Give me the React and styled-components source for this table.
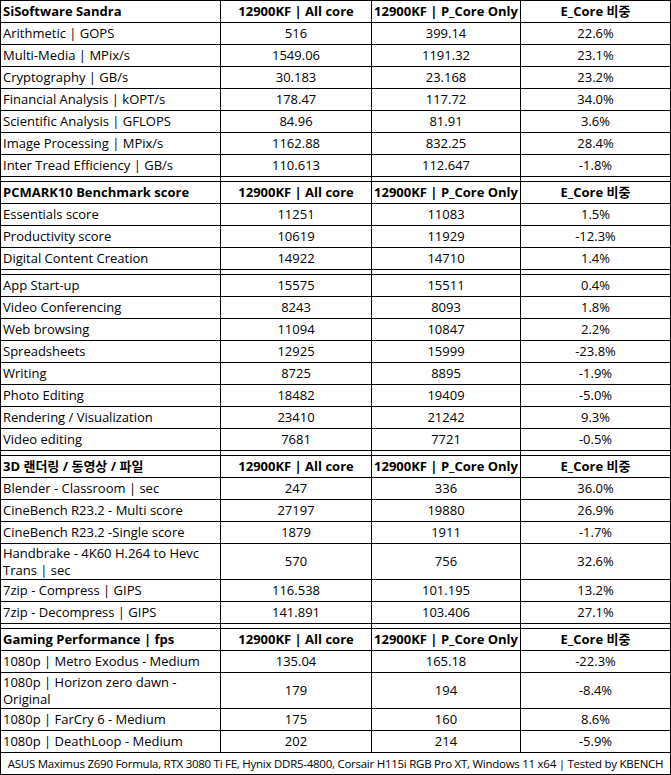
import React from 'react';
import styled, { createGlobalStyle } from 'styled-components';

const Global = createGlobalStyle`
  html, body { margin: 0; padding: 0; background: #fff; }
  body { font-family: "Open Sans", "Noto Sans CJK KR", sans-serif; }
`;

const Table = styled.table`
  border-collapse: separate;
  border-spacing: 0;
  table-layout: fixed;
  width: 671px;
  border-top: 1px solid #000;
  border-left: 1px solid #000;
  font-size: 13px;
  color: #000;
  box-sizing: border-box;
`;

const Col = styled.col`
  width: ${(p) => p.$w}px;
`;

const Cell = styled.td`
  box-sizing: border-box;
  height: ${(p) => (p.$tall ? 36 : 22)}px;
  padding: 0 2px;
  border-right: 1px solid #000;
  border-bottom: 1px solid #000;
  text-align: ${(p) => (p.$left ? 'left' : 'center')};
  font-weight: ${(p) => (p.$bold ? 700 : 400)};
  line-height: 17px;
  white-space: pre-line;
  vertical-align: middle;
  overflow: hidden;
`;

const Spacer = styled.td`
  box-sizing: border-box;
  height: 5px;
  padding: 0;
  font-size: 0;
  line-height: 0;
  border-right: 1px solid #000;
  border-bottom: 1px solid #000;
`;

const Footer = styled.td`
  box-sizing: border-box;
  height: 22px;
  padding: 0;
  border-right: 1px solid #000;
  border-bottom: 1px solid #000;
  text-align: center;
  font-size: 11.5px;
  letter-spacing: -0.26px;
  line-height: 17px;
  white-space: nowrap;
`;

const HEAD = ['12900KF | All core', '12900KF | P_Core Only', 'E_Core 비중'];

const sections = [
  {
    title: 'SiSoftware Sandra',
    rows: [
      ['Arithmetic | GOPS', '516', '399.14', '22.6%'],
      ['Multi-Media | MPix/s', '1549.06', '1191.32', '23.1%'],
      ['Cryptography | GB/s', '30.183', '23.168', '23.2%'],
      ['Financial Analysis | kOPT/s', '178.47', '117.72', '34.0%'],
      ['Scientific Analysis | GFLOPS', '84.96', '81.91', '3.6%'],
      ['Image Processing | MPix/s', '1162.88', '832.25', '28.4%'],
      ['Inter Tread Efficiency | GB/s', '110.613', '112.647', '-1.8%'],
    ],
  },
  {
    title: 'PCMARK10 Benchmark score',
    rows: [
      ['Essentials score', '11251', '11083', '1.5%'],
      ['Productivity score', '10619', '11929', '-12.3%'],
      ['Digital Content Creation', '14922', '14710', '1.4%'],
    ],
  },
  {
    title: null,
    rows: [
      ['App Start-up', '15575', '15511', '0.4%'],
      ['Video Conferencing', '8243', '8093', '1.8%'],
      ['Web browsing', '11094', '10847', '2.2%'],
      ['Spreadsheets', '12925', '15999', '-23.8%'],
      ['Writing', '8725', '8895', '-1.9%'],
      ['Photo Editing', '18482', '19409', '-5.0%'],
      ['Rendering / Visualization', '23410', '21242', '9.3%'],
      ['Video editing', '7681', '7721', '-0.5%'],
    ],
  },
  {
    title: '3D 랜더링 / 동영상 / 파일',
    rows: [
      ['Blender - Classroom | sec', '247', '336', '36.0%'],
      ['CineBench R23.2 - Multi score', '27197', '19880', '26.9%'],
      ['CineBench R23.2 -Single score', '1879', '1911', '-1.7%'],
      ['Handbrake - 4K60 H.264 to Hevc\nTrans | sec', '570', '756', '32.6%', true],
      ['7zip - Compress | GIPS', '116.538', '101.195', '13.2%'],
      ['7zip - Decompress | GIPS', '141.891', '103.406', '27.1%'],
    ],
  },
  {
    title: 'Gaming Performance | fps',
    rows: [
      ['1080p | Metro Exodus - Medium', '135.04', '165.18', '-22.3%'],
      ['1080p | Horizon zero dawn -\nOriginal', '179', '194', '-8.4%', true],
      ['1080p | FarCry 6 - Medium', '175', '160', '8.6%'],
      ['1080p | DeathLoop - Medium', '202', '214', '-5.9%'],
    ],
  },
];

function SpacerRow() {
  return (
    <tr>
      <Spacer />
      <Spacer />
      <Spacer />
      <Spacer />
    </tr>
  );
}

export default function App() {
  return (
    <>
      <Global />
      <Table>
        <colgroup>
          <Col $w={220} />
          <Col $w={151} />
          <Col $w={149} />
          <Col $w={150} />
        </colgroup>
        <tbody>
          {sections.map((s, si) => (
            <React.Fragment key={si}>
              {si > 0 && <SpacerRow />}
              {s.title && (
                <tr>
                  <Cell $left $bold>{s.title}</Cell>
                  {HEAD.map((h) => (
                    <Cell key={h} $bold>{h}</Cell>
                  ))}
                </tr>
              )}
              {s.rows.map((r) => (
                <tr key={r[0]}>
                  <Cell $left $tall={r[4]}>{r[0]}</Cell>
                  <Cell $tall={r[4]}>{r[1]}</Cell>
                  <Cell $tall={r[4]}>{r[2]}</Cell>
                  <Cell $tall={r[4]}>{r[3]}</Cell>
                </tr>
              ))}
            </React.Fragment>
          ))}
          <tr>
            <Footer colSpan={4}>
              ASUS Maximus Z690 Formula, RTX 3080 Ti FE, Hynix DDR5-4800, Corsair H115i RGB Pro XT, Windows 11 x64 | Tested by KBENCH
            </Footer>
          </tr>
        </tbody>
      </Table>
    </>
  );
}
